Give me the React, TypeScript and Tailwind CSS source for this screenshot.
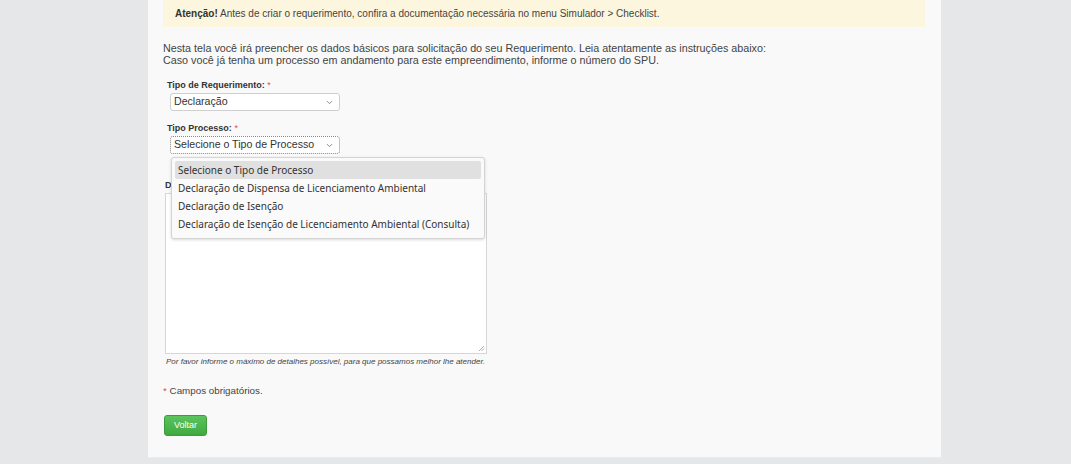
import { ChevronDown } from "lucide-react";

const options = [
  "Selecione o Tipo de Processo",
  "Declaração de Dispensa de Licenciamento Ambiental",
  "Declaração de Isenção",
  "Declaração de Isenção de Licenciamento Ambiental (Consulta)",
];

function Label({ text }: { text: string }) {
  return (
    <div className="text-[9px] leading-[12px] font-bold text-[#333]">
      {text} <span className="text-[#e5484d] font-normal">*</span>
    </div>
  );
}

function Select({ value, focused }: { value: string; focused?: boolean }) {
  return (
    <div
      className={`ml-[3px] w-[170px] h-[18px] bg-white rounded-[3px] flex items-center justify-between pl-[3px] pr-[5px] ${
        focused ? "border border-dotted border-[#888]" : "border border-[#cfcfcf]"
      }`}
    >
      <span className="text-[10.6px] text-[#333]">{value}</span>
      <ChevronDown className="w-[9px] h-[9px] text-[#666]" strokeWidth={2} />
    </div>
  );
}

export default function App() {
  return (
    <div
      className="w-[1071px] h-[464px] bg-[#e6e7e8] overflow-hidden"
      style={{ fontFamily: '"Liberation Sans", Arial, sans-serif' }}
    >
      <div className="ml-[148px] w-[793px] h-[458px] bg-[#f9f9f9] border-b border-[#ececec] pl-[15px] pr-[16px]">
        {/* Alerta */}
        <div className="h-[27px] bg-[#fdf6de] flex items-center pl-[12px] text-[10px] text-[#444]">
          <span>
            <b className="text-[#333]">Atenção!</b> Antes de criar o requerimento, confira a documentação
            necessária no menu Simulador &gt; Checklist.
          </span>
        </div>

        <div className="mt-[15px] text-[10.75px] leading-[12px] text-[#444]">
          <p>
            Nesta tela você irá preencher os dados básicos para solicitação do seu Requerimento. Leia
            atentamente as instruções abaixo:
          </p>
          <p>Caso você já tenha um processo em andamento para este empreendimento, informe o número do SPU.</p>
        </div>

        <div className="pl-[4px]">
          <div className="mt-[13px]">
            <Label text="Tipo de Requerimento:" />
            <div className="mt-[2px]">
              <Select value="Declaração" />
            </div>
          </div>

          <div className="mt-[11px] relative">
            <Label text="Tipo Processo:" />
            <div className="mt-[2px]">
              <Select value="Selecione o Tipo de Processo" focused />
            </div>

            {/* Lista aberta */}
            <div
              className="absolute left-[4px] top-[35px] w-[314px] h-[82px] bg-[#fafafa] border border-[#d4d4d4] rounded-[3px] shadow-[0_1px_3px_rgba(0,0,0,0.15)] z-10 px-[3px] pt-[3px]"
              style={{ fontFamily: '"Noto Sans", "DejaVu Sans", sans-serif' }}
            >
              {options.map((o, i) => (
                <div
                  key={o}
                  className={`h-[18px] flex items-center pl-[3px] text-[10px] text-[#333] rounded-[2px] ${
                    i === 0 ? "bg-[#e0e0e0]" : ""
                  }`}
                >
                  {o}
                </div>
              ))}
            </div>
          </div>

          <div className="mt-[25px] -ml-[2px]">
            <Label text="Descrição:" />
            <div className="mt-[2px] w-[322px] h-[161px] bg-white border border-[#d6d6d6] relative">
              <svg className="absolute right-[1px] bottom-[1px]" width="7" height="7" viewBox="0 0 7 7">
                <path d="M6 1L1 6M6 3.5L3.5 6" stroke="#999" strokeWidth="0.8" />
              </svg>
            </div>
            <div className="mt-[2px] pl-[1px] text-[8px] leading-[11px] italic text-[#444]">
              Por favor informe o máximo de detalhes possível, para que possamos melhor lhe atender.
            </div>
          </div>
        </div>

        <div className="mt-[18px] text-[9.8px] leading-[12px] text-[#444]">
          <span className="text-[#e5484d]">*</span> Campos obrigatórios.
        </div>

        <button className="mt-[18px] ml-[1px] w-[43px] h-[21px] rounded-[3px] bg-gradient-to-b from-[#5cc45c] to-[#3fa93f] border border-[#3c9c3c] text-white text-[9px]">
          Voltar
        </button>
      </div>
    </div>
  );
}
